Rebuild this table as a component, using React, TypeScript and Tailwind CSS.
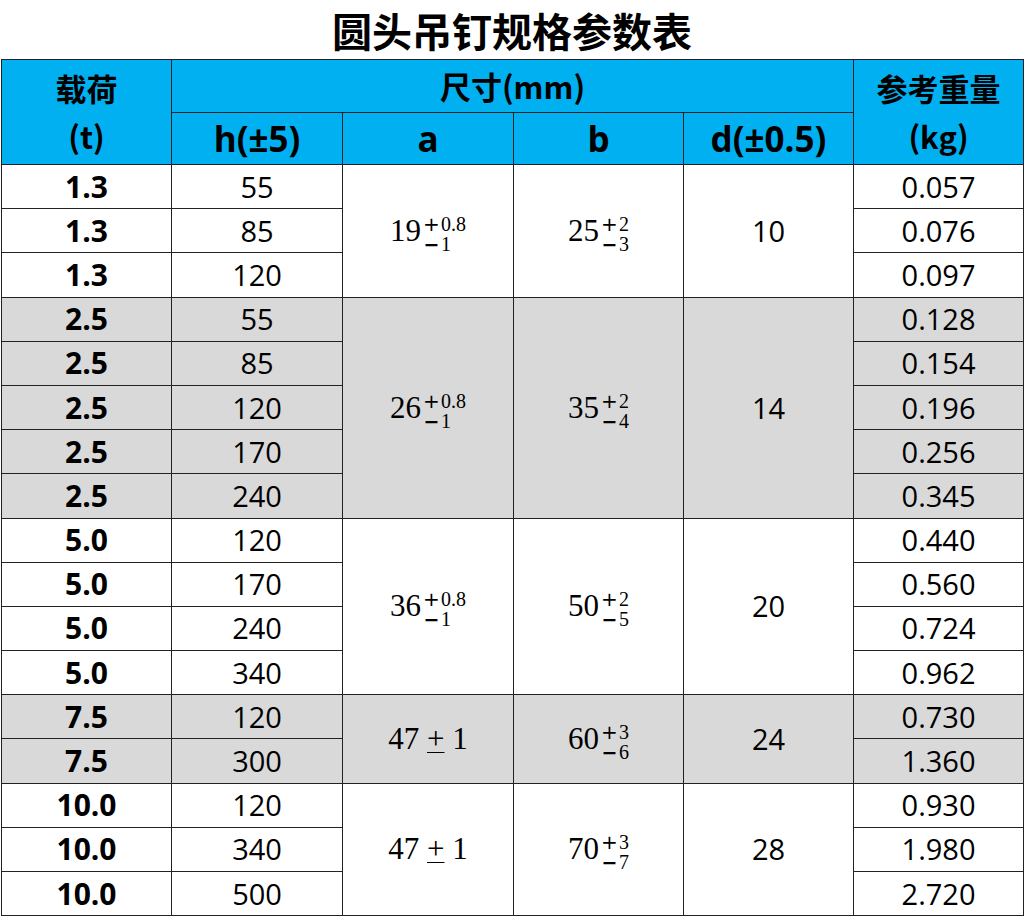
import React from 'react';

type Tol = { base: string; up?: string; down?: string; pm?: string };

type Group = {
  load: string;
  hs: string[];
  a: Tol;
  b: Tol;
  d: string;
  ws: string[];
  gray: boolean;
};

const groups: Group[] = [
  { load: '1.3', hs: ['55', '85', '120'], a: { base: '19', up: '0.8', down: '1' }, b: { base: '25', up: '2', down: '3' }, d: '10', ws: ['0.057', '0.076', '0.097'], gray: false },
  { load: '2.5', hs: ['55', '85', '120', '170', '240'], a: { base: '26', up: '0.8', down: '1' }, b: { base: '35', up: '2', down: '4' }, d: '14', ws: ['0.128', '0.154', '0.196', '0.256', '0.345'], gray: true },
  { load: '5.0', hs: ['120', '170', '240', '340'], a: { base: '36', up: '0.8', down: '1' }, b: { base: '50', up: '2', down: '5' }, d: '20', ws: ['0.440', '0.560', '0.724', '0.962'], gray: false },
  { load: '7.5', hs: ['120', '300'], a: { base: '47', pm: '1' }, b: { base: '60', up: '3', down: '6' }, d: '24', ws: ['0.730', '1.360'], gray: true },
  { load: '10.0', hs: ['120', '340', '500'], a: { base: '47', pm: '1' }, b: { base: '70', up: '3', down: '7' }, d: '28', ws: ['0.930', '1.980', '2.720'], gray: false },
];

const sans = "font-['Open_Sans','Noto_Sans_CJK_SC',sans-serif]";
const cjk = "font-['Noto_Sans_CJK_SC','Open_Sans',sans-serif]";

function TolText({ t }: { t: Tol }) {
  if (t.pm) {
    return (
      <span className="font-['Liberation_Serif',serif] text-[31px] leading-none">
        {t.base} <span className="underline underline-offset-[3px] decoration-1">+</span> {t.pm}
      </span>
    );
  }
  return (
    <span className="inline-flex items-center font-['Liberation_Serif',serif] leading-none">
      <span className="text-[31px] leading-[34px]">{t.base}</span>
      <span className="inline-flex flex-col items-start text-[20px] leading-[20px] mt-[6px] ml-px">
        <span className="flex items-center h-[20px]">
          <span className="w-[19px] text-center font-['DejaVu_Sans',sans-serif] text-[20px] leading-[20px]">+</span>
          <span>{t.up}</span>
        </span>
        <span className="flex items-center h-[20px]">
          <span className="w-[19px] text-center font-['DejaVu_Sans',sans-serif] font-bold text-[19px] leading-[20px]">−</span>
          <span>{t.down}</span>
        </span>
      </span>
    </span>
  );
}

export default function App() {
  const cell = 'border border-[#222] text-center align-middle p-0';
  return (
    <div className="w-[1024px] h-[918px] bg-white overflow-hidden">
      <div className={`h-[59px] flex items-center justify-center ${cjk} font-bold text-[40px] text-black`}>
        圆头吊钉规格参数表
      </div>
      <table className="ml-px w-[1022px] border-collapse table-fixed border border-[#444]">
        <colgroup>
          <col className="w-[170px]" />
          <col className="w-[171px]" />
          <col className="w-[171px]" />
          <col className="w-[170px]" />
          <col className="w-[170px]" />
          <col className="w-[170px]" />
        </colgroup>
        <thead>
          <tr className="h-[53px] bg-[#00b0f0]">
            <th rowSpan={2} className={`${cell} ${cjk} font-bold text-[31px] leading-[48px]`}>
              载荷<br />(t)
            </th>
            <th colSpan={4} className={`${cell} ${cjk} font-bold text-[31px] leading-[44px]`}>尺寸(mm)</th>
            <th rowSpan={2} className={`${cell} ${cjk} font-bold text-[31px] leading-[48px]`}>
              参考重量<br />(kg)
            </th>
          </tr>
          <tr className="h-[52px] bg-[#00b0f0]">
            <th className={`${cell} ${sans} font-bold text-[35px] leading-[44px]`}>h(±5)</th>
            <th className={`${cell} ${sans} font-bold text-[35px] leading-[44px]`}>a</th>
            <th className={`${cell} ${sans} font-bold text-[35px] leading-[44px]`}>b</th>
            <th className={`${cell} ${sans} font-bold text-[35px] leading-[44px]`}>d(±0.5)</th>
          </tr>
        </thead>
        <tbody className="text-black">
          {groups.map((g) =>
            g.hs.map((h, i) => (
              <tr key={g.load + h} className={`h-[44.2px] ${g.gray ? 'bg-[#d9d9d9]' : 'bg-white'}`}>
                <td className={`${cell} ${sans} font-bold text-[30px] leading-[36px]`}>{g.load}</td>
                <td className={`${cell} ${sans} text-[29px] leading-[36px]`}>{h}</td>
                {i === 0 && (
                  <>
                    <td rowSpan={g.hs.length} className={cell}><TolText t={g.a} /></td>
                    <td rowSpan={g.hs.length} className={cell}><TolText t={g.b} /></td>
                    <td rowSpan={g.hs.length} className={`${cell} ${sans} text-[29px] leading-[36px]`}>{g.d}</td>
                  </>
                )}
                <td className={`${cell} ${sans} text-[29px] leading-[36px]`}>{g.ws[i]}</td>
              </tr>
            ))
          )}
        </tbody>
      </table>
    </div>
  );
}
